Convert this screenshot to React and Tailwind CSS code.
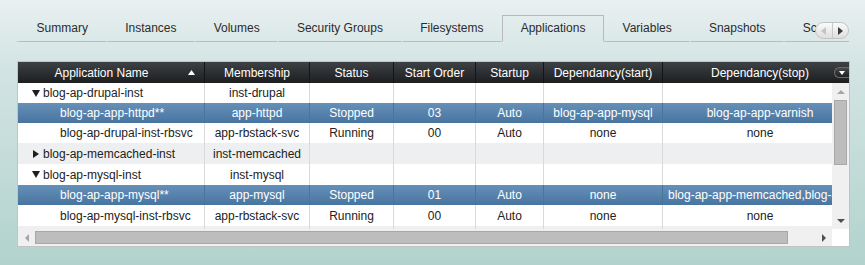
import React from "react";

const TABS = ["Summary", "Instances", "Volumes", "Security Groups", "Filesystems", "Applications", "Variables", "Snapshots", "Scripts"];

const WIDTHS = ["w-[187px]", "w-[105px]", "w-[84px]", "w-[82px]", "w-[68px]", "w-[119px]", "w-[195px]"];
const HEADERS = ["Application Name", "Membership", "Status", "Start Order", "Startup", "Dependancy(start)", "Dependancy(stop)"];

const ROWS = [
  { kind: "open", h: "h-[20px]", bg: "white", cells: ["blog-ap-drupal-inst", "inst-drupal", "", "", "", "", ""] },
  { kind: "child", h: "h-[20px]", bg: "sel", cells: ["blog-ap-app-httpd**", "app-httpd", "Stopped", "03", "Auto", "blog-ap-app-mysql", "blog-ap-app-varnish"] },
  { kind: "child", h: "h-[20px]", bg: "white", cells: ["blog-ap-drupal-inst-rbsvc", "app-rbstack-svc", "Running", "00", "Auto", "none", "none"] },
  { kind: "closed", h: "h-[21px]", bg: "gray", cells: ["blog-ap-memcached-inst", "inst-memcached", "", "", "", "", ""] },
  { kind: "open", h: "h-[21px]", bg: "white", cells: ["blog-ap-mysql-inst", "inst-mysql", "", "", "", "", ""] },
  { kind: "child", h: "h-[20px]", bg: "sel", cells: ["blog-ap-app-mysql**", "app-mysql", "Stopped", "01", "Auto", "none", "blog-ap-app-memcached,blog-ap-app-httpd"], leftLast: true },
  { kind: "child", h: "h-[21px]", bg: "white", cells: ["blog-ap-mysql-inst-rbsvc", "app-rbstack-svc", "Running", "00", "Auto", "none", "none"] },
  { kind: "empty", h: "h-[20px]", bg: "gray", cells: ["", "", "", "", "", "", ""] },
];

function Tabs() {
  return (
    <div className="relative w-[832px] h-[27px]">
      <div className="flex h-[27px] w-[832px] overflow-hidden">
        <div className="w-px shrink-0 border-b border-[#bcbcbc]" />
        {TABS.map((t) => {
          const active = t === "Applications";
          return (
            <div
              key={t}
              className={
                active
                  ? "shrink-0 h-[27px] px-[17.6px] pb-[2px] flex items-center whitespace-nowrap border border-[#b9b9b9] border-b-transparent text-[#2b2b2b]"
                  : "shrink-0 h-[27px] px-[17.6px] pb-[2px] flex items-center whitespace-nowrap border border-transparent border-b-[#bcbcbc] text-[#2b2b2b]"
              }
            >
              {t}
            </div>
          );
        })}
        <div className="flex-1 border-b border-[#bcbcbc]" />
      </div>
      <div className="absolute right-0 top-[7px] flex h-[17px] w-[34px] rounded-full border border-[#c2c2c2] bg-linear-to-b from-[#fbfbfb] to-[#dedede] overflow-hidden">
        <div className="flex flex-1 items-center justify-center border-r border-[#c8c8c8]">
          <svg width="5" height="8" viewBox="0 0 5 8"><path d="M5 0 L0 4 L5 8 Z" fill="#c4c4c4" /></svg>
        </div>
        <div className="flex flex-1 items-center justify-center">
          <svg width="5" height="8" viewBox="0 0 5 8"><path d="M0 0 L5 4 L0 8 Z" fill="#3a3a3a" /></svg>
        </div>
      </div>
    </div>
  );
}

function Header() {
  return (
    <div className="flex h-[21px] bg-linear-to-b from-[#3f4245] to-[#1c1e20] text-white">
      <div className="flex w-[814px] overflow-hidden">
        {HEADERS.map((h, i) => (
          <div
            key={h}
            className={
              "relative shrink-0 flex items-center justify-center border-r border-[#141517] whitespace-nowrap " +
              WIDTHS[i] +
              (i === 0 ? " pr-[19px]" : "")
            }
          >
            {h}
            {i === 0 && (
              <svg className="absolute right-[9px] top-[8px]" width="7" height="5" viewBox="0 0 7 5">
                <path d="M3.5 0 L7 5 L0 5 Z" fill="#ffffff" />
              </svg>
            )}
          </div>
        ))}
      </div>
      <div className="flex w-[17px] items-center justify-end">
        <div className="flex h-[11px] w-[15px] items-center justify-center rounded-l-full border border-r-0 border-[#6a6a6a] bg-linear-to-b from-[#4a4a4a] to-[#202020]">
          <svg width="6" height="4" viewBox="0 0 6 4"><path d="M0 0 L6 0 L3 4 Z" fill="#ffffff" /></svg>
        </div>
      </div>
    </div>
  );
}

function Row({ row }) {
  const sel = row.bg === "sel";
  const rowBg =
    sel ? "bg-linear-to-b from-[#6590b8] to-[#4874a0] text-white" : row.bg === "gray" ? "bg-[#eeeff0] text-[#222]" : "bg-white text-[#222]";
  const divider = sel ? "border-[#4a749c]" : "border-[#d9d9d9]";
  return (
    <div className={"flex shrink-0 " + row.h + " " + rowBg}>
      {row.cells.map((c, i) => {
        if (i === 0) {
          return (
            <div key={i} className={"shrink-0 flex items-center whitespace-nowrap overflow-hidden border-r " + divider + " " + WIDTHS[0]}>
              {row.kind === "open" && (
                <span className="flex items-center pl-[14px]">
                  <svg width="8" height="7" viewBox="0 0 8 7"><path d="M0 0 L8 0 L4 7 Z" fill="#1e1e1e" /></svg>
                  <span className="pl-[3px]">{c}</span>
                </span>
              )}
              {row.kind === "closed" && (
                <span className="flex items-center pl-[15px]">
                  <svg width="6" height="8" viewBox="0 0 6 8"><path d="M0 0 L6 4 L0 8 Z" fill="#1e1e1e" /></svg>
                  <span className="pl-[4px]">{c}</span>
                </span>
              )}
              {row.kind === "child" && <span className="pl-[42px]">{c}</span>}
            </div>
          );
        }
        const left = row.leftLast && i === 6;
        return (
          <div
            key={i}
            className={
              "shrink-0 flex items-center px-[5px] whitespace-nowrap overflow-hidden border-r " +
              divider +
              " " +
              WIDTHS[i] +
              (left ? " justify-start" : " justify-center")
            }
          >
            {c}
          </div>
        );
      })}
    </div>
  );
}

function VScroll() {
  return (
    <div className="flex w-[17px] flex-col items-center bg-[#f0f0f0]">
      <div className="flex h-[17px] w-[17px] items-center justify-center">
        <svg width="8" height="4" viewBox="0 0 8 4"><path d="M4 0 L8 4 L0 4 Z" fill="#a6a6a6" /></svg>
      </div>
      <div className="h-[65px] w-[13px] border border-[#a8a8a8] bg-[#bdbdbd]" />
      <div className="flex-1" />
      <div className="flex h-[17px] w-[17px] items-center justify-center">
        <svg width="8" height="4" viewBox="0 0 8 4"><path d="M0 0 L8 0 L4 4 Z" fill="#505050" /></svg>
      </div>
    </div>
  );
}

function HScroll() {
  return (
    <div className="flex h-[17px]">
      <div className="flex w-[814px] items-center bg-[#f0f0f0]">
        <div className="flex h-[17px] w-[17px] items-center justify-center">
          <svg width="4" height="8" viewBox="0 0 4 8"><path d="M4 0 L0 4 L4 8 Z" fill="#a6a6a6" /></svg>
        </div>
        <div className="h-[13px] w-[753px] border border-[#a8a8a8] bg-[#bdbdbd]" />
        <div className="flex-1" />
        <div className="flex h-[17px] w-[17px] items-center justify-center">
          <svg width="4" height="8" viewBox="0 0 4 8"><path d="M0 0 L4 4 L0 8 Z" fill="#505050" /></svg>
        </div>
      </div>
      <div className="w-[17px] bg-white" />
    </div>
  );
}

function Grid() {
  return (
    <div className="mt-[19px] w-[833px] border border-[#c3c3c3] bg-white">
      <Header />
      <div className="flex h-[146px]">
        <div className="flex w-[814px] flex-col overflow-hidden">
          {ROWS.map((r, i) => (
            <Row key={i} row={r} />
          ))}
        </div>
        <VScroll />
      </div>
      <HScroll />
    </div>
  );
}

export default function App() {
  return (
    <div className="h-[265px] w-[865px] overflow-hidden bg-linear-to-b from-[#e9f0f1] via-[#d3e4e3] via-25% to-[#b2d3cd] pt-[15px] pl-[17px] font-['Liberation_Sans',Arial,sans-serif] text-[12px] leading-[14px]">
      <Tabs />
      <Grid />
    </div>
  );
}
